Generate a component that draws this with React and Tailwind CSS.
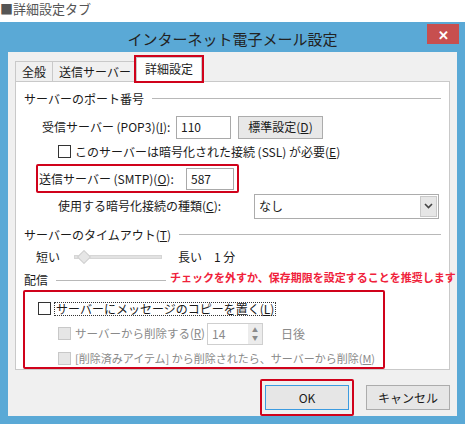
import React from 'react'

const F = { fontFamily: '"Noto Sans CJK JP", "Noto Sans", sans-serif' }

function Box({ disabled }) {
  return (
    <span className={`inline-block shrink-0 w-[13px] h-[13px] border ${disabled ? 'border-[#c8c8c8] bg-[#e6e6e6]' : 'border-[#333] bg-white'}`} />
  )
}

function Section({ label }) {
  return (
    <div className="flex items-center gap-2 h-[20px] whitespace-nowrap">
      <span>{label}</span>
      <div className="flex-1 h-px bg-[#b8b8b8]" />
    </div>
  )
}

export default function App() {
  return (
    <div style={F} className="w-[465px] h-[426px] bg-white text-[12px] text-[#1a1a1a] leading-none overflow-hidden whitespace-nowrap">
      <div className="h-[22px] text-[13px] leading-[18px] text-[#555]">■詳細設定タブ</div>
      <div className="h-[402px] bg-[#5aa9d6] px-[8px] pb-[8px] flex flex-col">
        {/* title bar */}
        <div className="h-[33px] flex items-center relative">
          <div className="flex-1 text-center text-[15px] text-[#222] pt-[3px]">インターネット電子メール設定</div>
          <div className="absolute right-[-2px] top-[2px] w-[32px] h-[20px] bg-[#c74f4f] text-white text-[13px] font-bold flex items-center justify-center">✕</div>
        </div>
        <div className="flex-1 bg-[#f0f0f0] px-[7px] pt-[5px] flex flex-col">
          {/* tabs */}
          <div className="flex items-end h-[24px]">
            <div className="h-[20px] px-[6px] border border-b-0 border-[#c9c9c9] bg-[#f0f0f0] flex items-center">全般</div>
            <div className="h-[20px] px-[6px] border border-b-0 border-l-0 border-[#c9c9c9] bg-[#f0f0f0] flex items-center">送信サーバー</div>
            <div className="h-[24px] px-[8px] border border-b-0 border-[#c9c9c9] bg-white flex items-start pt-[5px] ring-2 ring-[#d0021b] -ml-[2px] relative z-10">詳細設定</div>
          </div>
          {/* panel */}
          <div className="h-[289px] bg-white border border-[#c9c9c9] px-[8px] pt-[7px] flex flex-col">
            <Section label="サーバーのポート番号" />
            <div className="flex items-center h-[26px] mt-[6px] pl-[18px]">
              <span className="w-[134px]">受信サーバー (POP3)(<u>I</u>):</span>
              <div className="w-[55px] h-[23px] border border-[#a9a9a9] bg-white px-[4px] flex items-center">110</div>
              <div className="ml-[7px] w-[85px] h-[23px] border border-[#acacac] bg-[#e8e8e8] flex items-center justify-center">標準設定(<u>D</u>)</div>
            </div>
            <div className="flex items-center gap-[4px] h-[24px] pl-[34px]">
              <Box />
              <span>このサーバーは暗号化された接続 (SSL) が必要(<u>E</u>)</span>
            </div>
            <div className="flex items-center h-[30px] ml-[12px] w-[203px] border-2 border-[#d0021b] rounded-[2px] pl-[1px]">
              <span className="w-[147px]">送信サーバー (SMTP)(<u>O</u>):</span>
              <div className="w-[48px] h-[22px] border border-[#a9a9a9] bg-white px-[4px] flex items-center">587</div>
            </div>
            <div className="flex items-center h-[26px] pl-[34px]">
              <span className="w-[196px]">使用する暗号化接続の種類(<u>C</u>):</span>
              <div className="w-[185px] h-[25px] border border-[#acacac] bg-white flex items-center">
                <span className="flex-1 pl-[4px]">なし</span>
                <span className="w-[17px] h-[21px] mr-[1px] bg-[#e6e6e6] border border-[#c9c9c9] flex items-center justify-center">
                  <svg width="9" height="6" viewBox="0 0 9 6"><path d="M1 1l3.5 3.5L8 1" fill="none" stroke="#444" strokeWidth="1.6" /></svg>
                </span>
              </div>
            </div>
            <div className="mt-[6px]"><Section label={<>サーバーのタイムアウト(<u>T</u>)</>} /></div>
            <div className="flex items-center h-[24px] pl-[12px]">
              <span className="w-[38px]">短い</span>
              <div className="w-[88px] h-[4px] bg-[#e2e2e2] border border-[#d6d6d6] relative">
                <span className="absolute left-[4px] top-[-4px] w-[10px] h-[10px] bg-[#e6e6e6] border border-[#cfcfcf] rotate-45" />
              </div>
              <span className="ml-[16px]">長い　1 分</span>
            </div>
            <div className="flex items-center gap-2 h-[20px] mt-[2px]">
              <span className="shrink-0">配信</span>
              <div className="w-[110px] shrink-0 h-px bg-[#b8b8b8]" />
              <span className="text-[#f0213a] font-bold text-[11px] -mt-[6px] -ml-[4px]">チェックを外すか、保存期限を設定することを推奨します</span>
            </div>
            <div className="-ml-[1px] w-[362px] h-[79px] border-2 border-[#d0021b] rounded-[2px] pt-[8px] pl-[13px]">
              <div className="flex items-center gap-[3px] h-[17px]">
                <Box />
                <span className="border border-dotted border-[#333] px-[1px]">サーバーにメッセージのコピーを置く(<u>L</u>)</span>
              </div>
              <div className="flex items-center gap-[4px] h-[25px] pl-[20px] text-[#8a8a8a] mt-[4px]">
                <Box disabled />
                <span className="w-[128px] text-[11.5px]">サーバーから削除する(<u>R</u>)</span>
                <div className="w-[56px] h-[22px] border border-[#cfcfcf] bg-white flex items-center">
                  <span className="flex-1 pl-[4px]">14</span>
                  <span className="w-[14px] h-[20px] bg-[#ececec] flex flex-col items-center justify-center text-[6px] leading-[8px]"><span>▲</span><span>▼</span></span>
                </div>
                <span className="ml-[14px]">日後</span>
              </div>
              <div className="flex items-center gap-[4px] h-[24px] pl-[20px] text-[#8a8a8a] text-[11px]">
                <Box disabled />
                <span>[削除済みアイテム] から削除されたら、サーバーから削除(<u>M</u>)</span>
              </div>
            </div>
          </div>
          {/* buttons */}
          <div className="flex justify-end items-center gap-[12px] mt-[9px]">
            <div className="w-[94px] h-[37px] border-2 border-[#d0021b] rounded-[2px] flex items-center justify-center">
              <div className="w-[84px] h-[25px] border border-[#3c9be0] bg-[#e6e6e6] flex items-center justify-center">OK</div>
            </div>
            <div className="w-[84px] h-[25px] border border-[#acacac] bg-[#e6e6e6] flex items-center justify-center">キャンセル</div>
          </div>
        </div>
      </div>
    </div>
  )
}
